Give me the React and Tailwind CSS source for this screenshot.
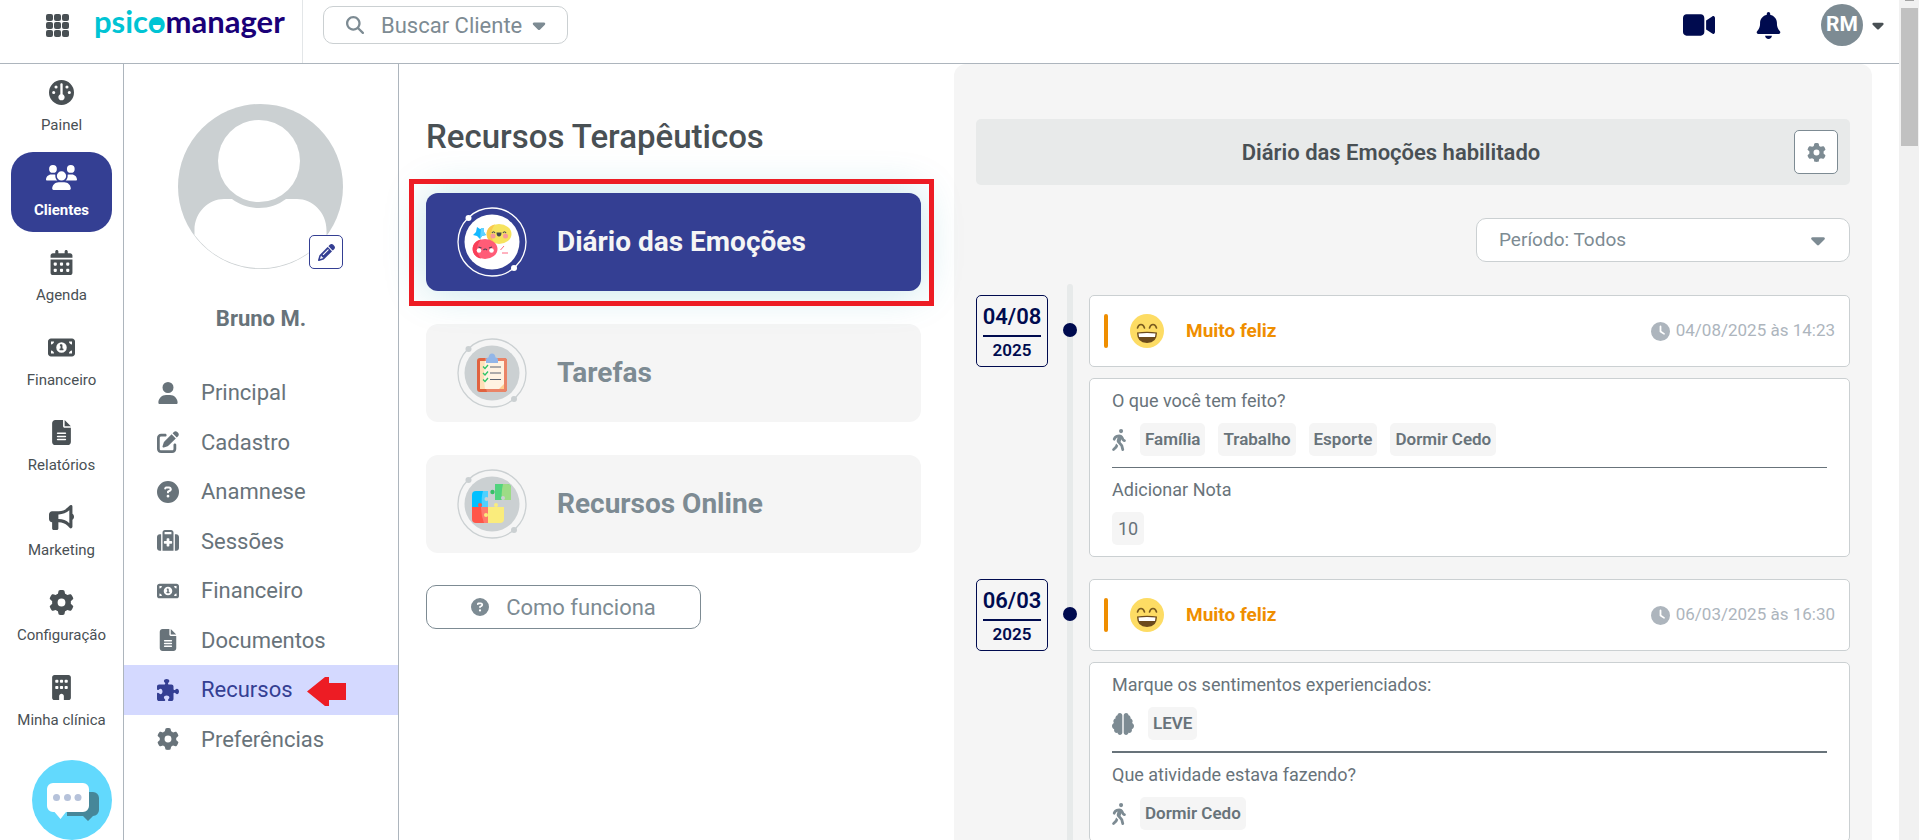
import {
    FaBell,
    FaBrain,
    FaBuilding,
    FaBullhorn,
    FaCalendarDays,
    FaCaretDown,
    FaCircleQuestion,
    FaClock,
    FaFileLines,
    FaGauge,
    FaGear,
    FaMagnifyingGlass,
    FaMoneyBill1,
    FaPencil,
    FaPenToSquare,
    FaPersonWalking,
    FaPuzzlePiece,
    FaSuitcaseMedical,
    FaUser,
    FaUsers,
    FaVideo,
} from 'react-icons/fa6';

const mainMenu = [
    { label: 'Painel', icon: FaGauge },
    { label: 'Clientes', icon: FaUsers, active: true },
    { label: 'Agenda', icon: FaCalendarDays },
    { label: 'Financeiro', icon: FaMoneyBill1 },
    { label: 'Relatórios', icon: FaFileLines },
    { label: 'Marketing', icon: FaBullhorn },
    { label: 'Configuração', icon: FaGear },
    { label: 'Minha clínica', icon: FaBuilding },
];

const clientMenu = [
    { label: 'Principal', icon: FaUser },
    { label: 'Cadastro', icon: FaPenToSquare },
    { label: 'Anamnese', icon: FaCircleQuestion },
    { label: 'Sessões', icon: FaSuitcaseMedical },
    { label: 'Financeiro', icon: FaMoneyBill1 },
    { label: 'Documentos', icon: FaFileLines },
    { label: 'Recursos', icon: FaPuzzlePiece, active: true },
    { label: 'Preferências', icon: FaGear },
];

const entries = [
    {
        day: '04/08',
        year: '2025',
        mood: 'Muito feliz',
        date: '04/08/2025 às 14:23',
        divider: 'h-px',
        blocks: [
            { title: 'O que você tem feito?', icon: FaPersonWalking, tags: ['Família', 'Trabalho', 'Esporte', 'Dormir Cedo'] },
            { title: 'Adicionar Nota', note: '10' },
        ],
    },
    {
        day: '06/03',
        year: '2025',
        mood: 'Muito feliz',
        date: '06/03/2025 às 16:30',
        divider: 'h-[2px]',
        blocks: [
            { title: 'Marque os sentimentos experienciados:', icon: FaBrain, tags: ['LEVE'] },
            { title: 'Que atividade estava fazendo?', icon: FaPersonWalking, tags: ['Dormir Cedo'] },
        ],
    },
];

function Logo() {
    return (
        <svg width="194" height="48" viewBox="0 0 194 48" role="img" aria-label="psicomanager">
            <text x="0" y="33" fontFamily="Lato, sans-serif" fontSize="31" fontWeight="700" fill="#00c4d4">
                psico<tspan fill="#1a0078">manager</tspan>
            </text>
            <path d="M56 25a6 6 0 0 1 12 0z" fill="#00c4d4" />
        </svg>
    );
}

function GridIcon() {
    const cells = [0, 8, 16];
    return (
        <svg width="23" height="23" viewBox="0 0 23 23" fill="#495054">
            {cells.map((y) => cells.map((x) => <rect key={`${x}-${y}`} x={x} y={y} width="7" height="7" rx="2" />))}
        </svg>
    );
}

function AvatarPicture() {
    return (
        <svg className="w-full h-auto" viewBox="0 0 165 165">
            <circle cx="82.5" cy="82.5" r="82.5" fill="#cbd0d2" />
            <circle cx="81" cy="57" r="41" fill="#fff" />
            <path
                d="M16.500 131V126C16.500 108 31 95 46 95H54C62 101 71 104 81 104S100 101 108 95H119C134 95 148.500 108 148.500 126V131A82.300 82.300 0 0 1 16.500 131Z"
                fill="#fff"
            />
        </svg>
    );
}

// Ring with two dots shared by all resource cards
function ResourceBadge({ ring, disc, children }) {
    return (
        <svg width="70" height="70" viewBox="0 0 70 70" className="shrink-0">
            <circle cx="35" cy="35" r="34" fill="none" stroke={ring} strokeWidth="1.300" />
            <circle cx="35" cy="35" r="27.500" fill={disc} />
            <circle cx="11.500" cy="11" r="3" fill={ring} />
            <circle cx="57" cy="61" r="3" fill={ring} />
            {children}
        </svg>
    );
}

function EmotionsArt() {
    return (
        <g>
            <path d="M20 20l3 2 4-1 0 4 2 3-4 1-2 3-3-3-4-1 3-3z" fill="#14b9ff" />
            <path d="M24 21l3 0 0 4 2 3-4 1-2 3z" fill="#5fd2ff" />
            <ellipse cx="42" cy="27" rx="12.500" ry="10" fill="#f6e35f" />
            <path d="M38 17.500C27 19 27 35 38 36.500C33 31 33 23 38 17.500Z" fill="#f9c94e" />
            <ellipse cx="28" cy="42" rx="12.500" ry="10" fill="#ff5c77" />
            <path d="M24 32.500C13 34 13 50 24 51.500C19 46 19 38 24 32.500Z" fill="#f93f58" />
            <circle cx="36" cy="29" r="2.500" fill="#f79a9a" />
            <circle cx="48.500" cy="29" r="2.500" fill="#f79a9a" />
            <path d="M35 26q1.500-2.500 3 0M46 26q1.500-2.500 3 0" stroke="#4b4f56" strokeWidth="1.200" fill="none" />
            <path d="M39.500 25.500h5q0 4-2.500 4t-2.500-4z" fill="#3f464f" />
            <circle cx="22" cy="43.500" r="2.300" fill="#fff" />
            <circle cx="34.500" cy="43.500" r="2.300" fill="#fff" />
            <path d="M21.500 40l3 1M35 40l-3 1M26.500 43q1.700-2 3.400 0" stroke="#4b3f56" strokeWidth="1.200" fill="none" />
            <path d="M43.500 43l3.500-4M45 46h6" stroke="#ff6680" strokeWidth="1" />
        </g>
    );
}

function TasksArt() {
    return (
        <g>
            <rect x="20" y="20" width="30" height="34" rx="3" fill="#e0623f" />
            <path d="M28 20h19a3 3 0 0 1 3 3v28a3 3 0 0 1-3 3H30q-3-8-3-17t1-17z" fill="#ea8467" />
            <rect x="23" y="23" width="24" height="28" fill="#fff3e2" />
            <path d="M23 23h5q-2 14 0 28h-5z" fill="#ffe0b8" />
            <path d="M47 46v5h-5z" fill="#ffcf8f" />
            <path d="M29 25v-3q0-2.500 2.500-2.500Q32 15.500 35 15.500T38.500 19.500Q41 19.500 41 22v3z" fill="#92b6e8" />
            <path d="M26 28.500l2 2 3-3.500M26 35l2 2 3-3.500M26 41.500l2 2 3-3.500" stroke="#2fc466" strokeWidth="1.300" fill="none" />
            <path d="M33 29h11M33 35h11M33 41.500h11" stroke="#5b6370" strokeWidth="1.200" />
        </g>
    );
}

function OnlineArt() {
    return (
        <g>
            <path d="M19 22h12v16H15V26a4 4 0 0 1 4-4z" fill="#00c0ff" />
            <path d="M26 22h5v16h-6q-1-10 1-16z" fill="#4fd0ff" />
            <path d="M15 38h16v16H19a4 4 0 0 1-4-4z" fill="#ff5548" />
            <path d="M24 38h7v16h-4q-3-8-3-16z" fill="#ff7b6c" />
            <path d="M31 38h16v12a4 4 0 0 1-4 4H31z" fill="#faec7c" />
            <path d="M38 15h12a4 4 0 0 1 4 4v12H38z" fill="#52d37e" />
            <path d="M46 15h4a4 4 0 0 1 4 4v12h-9q-1-8 1-16z" fill="#9ddc86" />
            <circle cx="35.500" cy="23" r="2.200" fill="#38bf68" />
            <circle cx="23" cy="36" r="2" fill="#ff5548" />
            <circle cx="39" cy="36" r="2" fill="#faec7c" />
            <circle cx="29" cy="46" r="2" fill="#faec7c" />
            <circle cx="29.500" cy="30" r="2" fill="#cbd0d2" />
            <circle cx="46" cy="29" r="2" fill="#cbd0d2" />
        </g>
    );
}

function HappyFace() {
    return (
        <svg width="34" height="34" viewBox="0 0 34 34">
            <circle cx="17" cy="17" r="17" fill="#fddc64" />
            <path d="M7.500 14q1-3.500 3.500-3.500t3.500 3.500M19.500 14q1-3.500 3.500-3.500t3.500 3.500" stroke="#7a5b1f" strokeWidth="1.600" fill="none" strokeLinecap="round" />
            <path d="M7 18.500Q17 17 27 18.500Q27 29 17 29T7 18.500Z" fill="#6b4a1c" />
            <path d="M8.500 19.600Q17 18.300 25.500 19.600L25 23H9z" fill="#fff" />
        </svg>
    );
}

function Header() {
    return (
        <header className="flex h-16 shrink-0 items-start border-b border-[#adb5bd]">
            <div className="flex h-full w-[303px] shrink-0 items-start border-r border-[#e3e6e8] pl-[46px]">
                <button aria-label="Aplicativos" className="mt-[14px]">
                    <GridIcon />
                </button>
                <a href="#" className="ml-[25px]">
                    <Logo />
                </a>
            </div>
            <button className="ml-5 mt-[6px] flex h-[38px] w-[245px] items-center rounded-[10px] border border-[#cbd0d2] pl-[22px] text-[22px] text-[#7d8b93]">
                <FaMagnifyingGlass className="size-[18px]" />
                <span className="ml-[17px] mr-[7px]">Buscar Cliente</span>
                <FaCaretDown className="size-5" />
            </button>
            <div className="ml-auto flex h-[50px] items-center pr-3 text-[#000b4f]">
                <button aria-label="Vídeo">
                    <FaVideo className="size-8" />
                </button>
                <button aria-label="Notificações" className="ml-10">
                    <FaBell className="size-[27px]" />
                </button>
                <button className="ml-[39px] flex items-center gap-[6px]">
                    <span className="flex size-[42px] items-center justify-center rounded-full bg-[#7d8b93] text-[21px] font-bold text-white">RM</span>
                    <FaCaretDown className="size-[18px] text-[#495054]" />
                </button>
            </div>
        </header>
    );
}

function MainSidebar() {
    return (
        <nav className="flex w-[124px] shrink-0 flex-col gap-[5px] border-r border-[#adb5bd] pl-[11px] pr-[11px] pt-[3px]">
            {mainMenu.map(({ label, icon: Icon, active }) => (
                <a
                    key={label}
                    href="#"
                    className={`flex h-20 shrink-0 flex-col items-center whitespace-nowrap rounded-[22px] pt-[13px] text-[15px] leading-5 ${
                        active ? 'bg-[#343f93] font-bold text-white' : 'text-[#495054]'
                    }`}
                >
                    <Icon className={active ? 'h-[25px] w-[31px]' : 'h-[25px] w-[27px]'} />
                    <span className="mt-[10px]">{label}</span>
                </a>
            ))}
        </nav>
    );
}

function ClientSidebar() {
    return (
        <aside className="w-[275px] shrink-0 border-r border-[#adb5bd]">
            <div className="relative ml-[54px] mt-10 w-[165px]">
                <AvatarPicture />
                <button
                    aria-label="Editar foto"
                    className="absolute bottom-0 right-0 flex size-[34px] items-center justify-center rounded-[5px] border border-[#343f93] bg-white text-[#343f93]"
                >
                    <FaPencil className="size-[17px]" />
                </button>
            </div>
            <h2 className="mt-9 text-center text-[22px] font-bold leading-7 text-[#68737a]">Bruno M.</h2>
            <nav className="mt-[35px] flex h-[396px] flex-col">
                {clientMenu.map(({ label, icon: Icon, active }) => (
                    <a
                        key={label}
                        href="#"
                        className={`flex flex-1 items-center pl-[33px] text-[22px] ${active ? 'bg-[#d4d9ff] text-[#343f93]' : 'text-[#68737a]'}`}
                    >
                        <Icon className="size-[22px]" />
                        <span className="ml-[22px]">{label}</span>
                        {active && (
                            <svg width="39" height="29" viewBox="0 0 39 29" className="ml-[14px] mt-[3px]">
                                <path d="M0 14.500L18 0h4v6h17v17H22v6h-4z" fill="#ed1c24" />
                            </svg>
                        )}
                    </a>
                ))}
            </nav>
        </aside>
    );
}

function Resources() {
    return (
        <section className="w-[555px] shrink-0 pl-[27px] pr-[33px] pt-[53px]">
            <h1 className="text-[33px] font-medium leading-10 text-[#495054]">Recursos Terapêuticos</h1>
            <div className="mt-9 flex flex-col gap-[33px]">
                <div className="relative">
                    <a href="#" className="flex h-[98px] items-center rounded-xl bg-[#343f93] pl-[31px] text-[28px] font-bold text-[#f5f5f5] shadow-[0_0_40px_rgba(20,150,170,0.25)]">
                        <ResourceBadge ring="#ffffff" disc="#ffffff">
                            <EmotionsArt />
                        </ResourceBadge>
                        <span className="ml-[30px]">Diário das Emoções</span>
                    </a>
                    <div className="pointer-events-none absolute -bottom-[15px] -left-[17px] -right-[13px] -top-[14px] border-[5px] border-[#ed1c24]"></div>
                </div>
                <a href="#" className="flex h-[98px] items-center rounded-xl bg-[#f5f5f5] pl-[31px] text-[28px] font-bold text-[#7d8b93]">
                    <ResourceBadge ring="#cbd0d2" disc="#cbd0d2">
                        <TasksArt />
                    </ResourceBadge>
                    <span className="ml-[30px]">Tarefas</span>
                </a>
                <a href="#" className="flex h-[98px] items-center rounded-xl bg-[#f5f5f5] pl-[31px] text-[28px] font-bold text-[#7d8b93]">
                    <ResourceBadge ring="#cbd0d2" disc="#cbd0d2">
                        <OnlineArt />
                    </ResourceBadge>
                    <span className="ml-[30px]">Recursos Online</span>
                </a>
            </div>
            <button className="mt-8 flex h-11 w-[275px] items-center justify-center gap-[17px] rounded-[10px] border border-[#7d8b93] text-[22px] text-[#7d8b93]">
                <FaCircleQuestion className="size-[18px]" />
                Como funciona
            </button>
        </section>
    );
}

function Block({ title, icon: Icon, tags, note }) {
    return (
        <div>
            <h3 className="text-[18px] leading-6 text-[#68737a]">{title}</h3>
            <div className="mt-[10px] flex h-[33px] items-center text-[17px] text-[#68737a]">
                {Icon && <Icon className={Icon === FaBrain ? 'mr-[14px] size-[22px] text-[#7d8b93]' : 'mr-[14px] h-[22px] w-[14px] text-[#7d8b93]'} />}
                {tags && (
                    <ul className="flex gap-[13px] font-semibold">
                        {tags.map((tag) => (
                            <li key={tag} className="rounded-[5px] bg-[#f5f5f5] px-[5px] leading-[33px]">
                                {tag}
                            </li>
                        ))}
                    </ul>
                )}
                {note && <p className="rounded-[5px] bg-[#f5f5f5] px-[6px] text-[18px] leading-[33px]">{note}</p>}
            </div>
        </div>
    );
}

function Entry({ entry }) {
    return (
        <article className="flex items-start">
            {/* Date */}
            <div className="flex h-[72px] w-[72px] shrink-0 flex-col items-center rounded-[5px] border border-[#000b4f] font-semibold text-[#000b4f]">
                <span className="mt-[6px] text-[22px] leading-[30px]">{entry.day}</span>
                <span className="mt-[3px] h-[2px] w-[58px] bg-[#000b4f]"></span>
                <span className="mt-[2px] text-[17px] leading-[22px]">{entry.year}</span>
            </div>
            <span className="relative ml-[15px] mt-7 size-[14px] shrink-0 rounded-full bg-[#000b4f]"></span>

            {/* Answers */}
            <div className="ml-3 flex-1">
                <div className="flex h-[72px] items-center rounded-[5px] border border-[#cbd0d2] bg-white pl-[14px] pr-[14px]">
                    <span className="h-[34px] w-1 rounded-sm bg-[#ef8e00]"></span>
                    <span className="ml-[22px]">
                        <HappyFace />
                    </span>
                    <strong className="ml-[22px] text-[19px] font-bold text-[#ef8e00]">{entry.mood}</strong>
                    <span className="ml-auto flex items-center gap-[6px] text-[17px] text-[#adb5bd]">
                        <FaClock className="size-[19px]" />
                        {entry.date}
                    </span>
                </div>
                <div className="mt-[11px] rounded-[5px] border border-[#cbd0d2] bg-white px-[22px] pb-[11px] pt-[10px]">
                    <Block {...entry.blocks[0]} />
                    <div className={`mb-[10px] mt-[11px] bg-[#68737a] ${entry.divider}`}></div>
                    <Block {...entry.blocks[1]} />
                </div>
            </div>
        </article>
    );
}

function Diary() {
    return (
        <section className="mr-[27px] flex flex-1 flex-col rounded-t-xl bg-[#f5f5f5] px-[22px] pt-[55px]">
            <div className="flex h-[66px] shrink-0 items-center rounded-[5px] bg-[#e8eaea] px-3">
                <h2 className="flex-1 text-center text-[22px] font-semibold text-[#495054]">Diário das Emoções habilitado</h2>
                <button aria-label="Configurar" className="flex size-11 items-center justify-center rounded-[5px] border border-[#7d8b93] bg-white text-[#7d8b93]">
                    <FaGear className="size-[19px]" />
                </button>
            </div>
            <div className="relative mt-[33px] w-[374px] shrink-0 self-end">
                <select aria-label="Período" className="h-11 w-full appearance-none rounded-[10px] border border-[#cbd0d2] bg-white pl-[22px] text-[19px] text-[#7d8b93]">
                    <option>Período: Todos</option>
                </select>
                <FaCaretDown className="pointer-events-none absolute right-[21px] top-[11px] size-[22px] text-[#7d8b93]" />
            </div>
            <div className="relative mt-[22px] flex flex-1 flex-col gap-[22px] pt-[11px]">
                <div className="absolute bottom-0 left-[91px] top-0 w-[6px] rounded-t-sm bg-[#e7eaea]"></div>
                {entries.map((entry) => (
                    <Entry key={entry.date} entry={entry} />
                ))}
            </div>
        </section>
    );
}

function ChatButton() {
    return (
        <button aria-label="Chat" className="fixed bottom-0 left-8">
            <svg width="80" height="80" viewBox="0 0 80 80">
                <circle cx="40" cy="40" r="40" fill="#62d9fd" />
                <path d="M35 32h26a6 6 0 0 1 6 6v12a6 6 0 0 1-6 6l-5 5-5-5H35z" fill="#468799" />
                <path d="M21 23h30a6 6 0 0 1 6 6v17a6 6 0 0 1-6 6H34l-5.500 7-6-7H21a6 6 0 0 1-6-6V29a6 6 0 0 1 6-6z" fill="#fff" />
                <circle cx="24.500" cy="37.500" r="3.500" fill="#b6c2da" />
                <circle cx="35.500" cy="37.500" r="3.500" fill="#b6c2da" />
                <circle cx="46" cy="37.500" r="3.500" fill="#b6c2da" />
            </svg>
        </button>
    );
}

function App() {
    return (
        <div className="flex h-screen overflow-hidden bg-white font-[Roboto,sans-serif]">
            <div className="flex min-w-0 flex-1 flex-col">
                <Header />
                <div className="flex min-h-0 flex-1">
                    <MainSidebar />
                    <ClientSidebar />
                    <Resources />
                    <Diary />
                </div>
            </div>

            {/* Scroll track */}
            <div className="flex w-5 shrink-0 flex-col items-center bg-[#f1f1f1]">
                <div className="h-px w-[9px] bg-[#a3a3a3]"></div>
                <div className="mt-[7px] h-[138px] w-[17px] bg-[#c1c1c1]"></div>
            </div>
            <ChatButton />
        </div>
    );
}

export default App;
